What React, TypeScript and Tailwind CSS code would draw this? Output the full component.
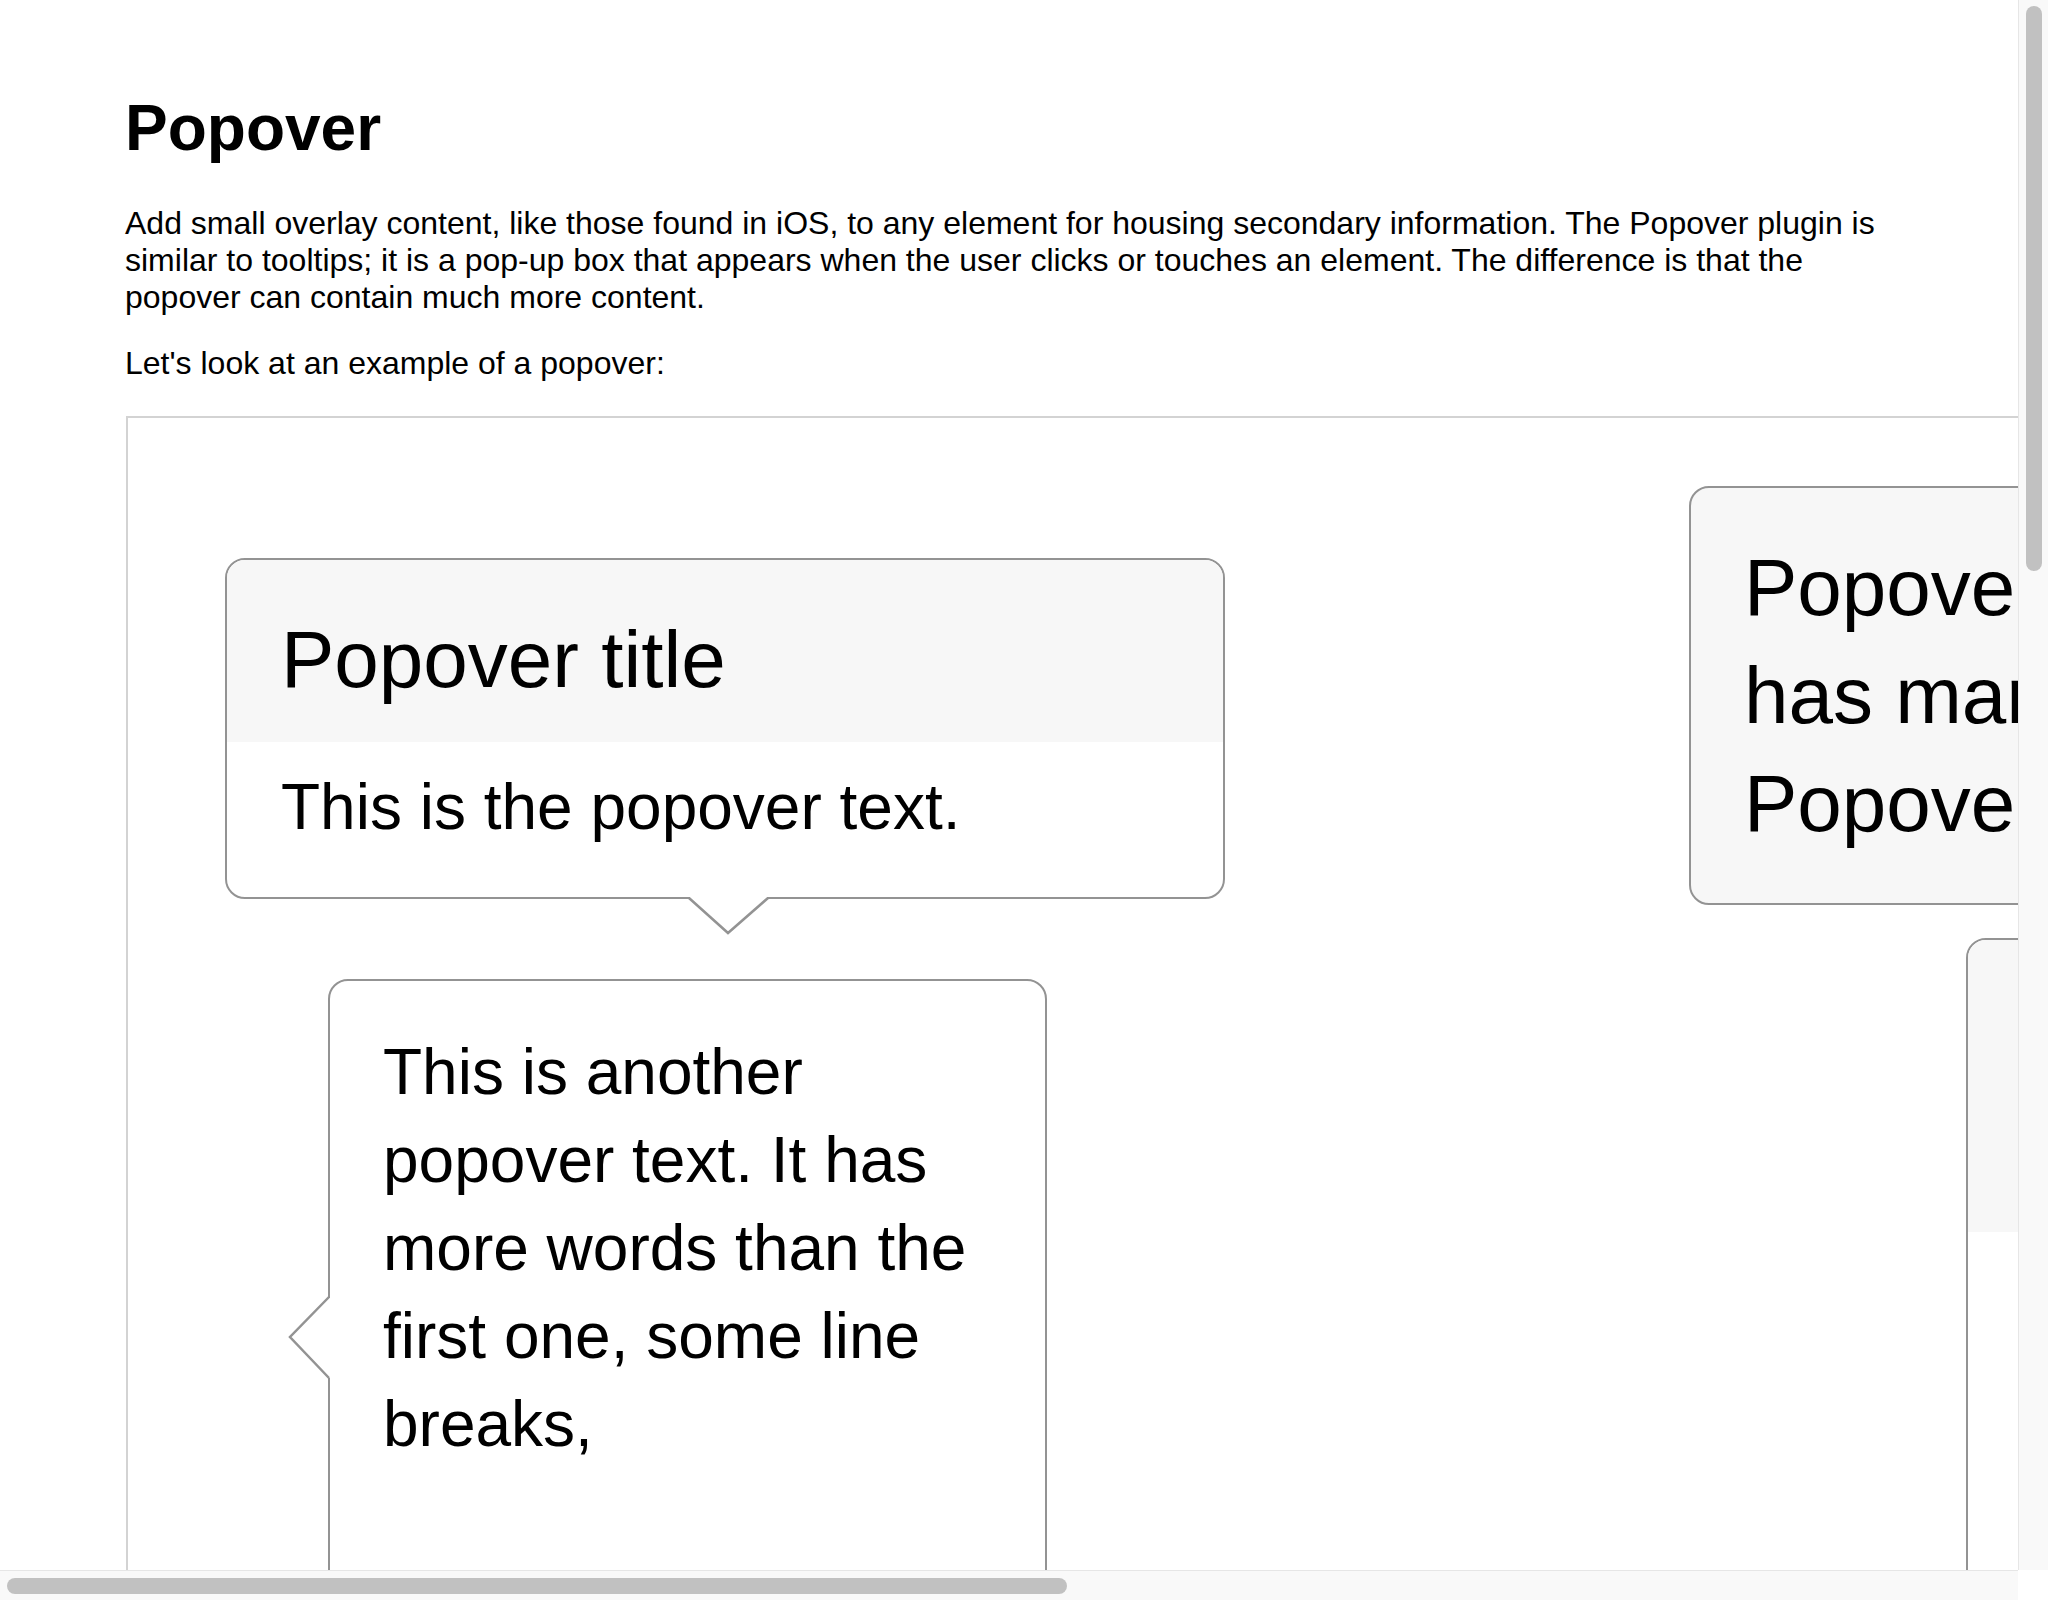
import React from 'react';

// ─── Popover arrows ───────────────────────────────────────────────────────────

function ArrowDown({ className }: { className: string }) {
  return (
    <svg className={className} width="80" height="40" viewBox="0 0 80 40" overflow="visible">
      <path d="M1 0 L78 0 L78 3 L39 38 L1 3 Z" fill="#fff" />
      <path d="M0 3 L39 38 L79 3" fill="none" stroke="#939393" strokeWidth="2.5" />
    </svg>
  );
}

function ArrowLeft({ className }: { className: string }) {
  return (
    <svg className={className} width="44" height="84" viewBox="0 0 44 84" overflow="visible">
      <path d="M40 2 L44 2 L44 82 L40 82 L2 41 Z" fill="#fff" />
      <path d="M41 1 L2 41 L41 82" fill="none" stroke="#939393" strokeWidth="2.5" />
    </svg>
  );
}

// ─── Example picture of popovers ──────────────────────────────────────────────

function PopoverDemo() {
  return (
    <div className="mt-[34px] ml-[1px] w-[2400px] h-[1400px] shrink-0 flex border-l-2 border-t-2 border-[#d3d3d3] bg-white">
      <div className="pl-[97px] pt-[140px] flex flex-col shrink-0">
        {/* Top popover with title */}
        <div className="relative w-[1000px] h-[341px] rounded-[20px] border-2 border-[#939393] bg-white">
          <div className="h-[182px] rounded-t-[18px] bg-[#f7f7f7] pl-[54px] pt-[52px] text-[80px] leading-[96px] whitespace-nowrap">
            Popover title
          </div>
          <div className="pl-[54px] pt-[27px] text-[64px] leading-[76px] whitespace-nowrap">
            This is the popover text.
          </div>
          <ArrowDown className="absolute left-[462px] top-[335px]" />
        </div>

        {/* Popover with arrow on the left */}
        <div className="relative mt-[80px] ml-[103px] w-[719px] h-[700px] rounded-[20px] border-2 border-[#939393] bg-white pl-[53px] pt-[47px] text-[64px] leading-[88px] whitespace-nowrap">
          This is another
          <br />
          popover text. It has
          <br />
          more words than the
          <br />
          first one, some line
          <br />
          breaks,
          <ArrowLeft className="absolute left-[-42px] top-[315px]" />
        </div>
      </div>

      <div className="ml-[464px] pt-[68px] flex flex-col shrink-0">
        <div className="w-[800px] h-[419px] rounded-[20px] border-2 border-[#939393] bg-[#f7f7f7] pl-[53px] pt-[46px] text-[80px] leading-[108px] whitespace-nowrap">
          Popover title that
          <br />
          has many words.
          <br />
          Popover title
        </div>

        <div className="mt-[33px] ml-[277px] w-[600px] h-[800px] rounded-[20px] border-2 border-[#939393] bg-white">
          <div className="h-[292px] rounded-t-[18px] bg-[#f7f7f7]" />
        </div>
      </div>
    </div>
  );
}

// ─── Window scrollbars ────────────────────────────────────────────────────────

function VerticalScrollbar() {
  return (
    <div className="w-[30px] shrink-0 border-l border-[#e6e6e6] bg-[#f9f9f9] pl-[7px] pt-[6px]">
      <div className="w-[16px] h-[565px] rounded-full bg-[#c1c1c1]" />
    </div>
  );
}

function HorizontalScrollbar() {
  return (
    <div className="h-[30px] shrink-0 flex">
      <div className="flex-1 border-t border-[#e6e6e6] bg-[#f9f9f9] pl-[7px] pt-[7px]">
        <div className="w-[1060px] h-[16px] rounded-full bg-[#c1c1c1]" />
      </div>
      <div className="w-[30px] bg-white" />
    </div>
  );
}

// ─── Page ─────────────────────────────────────────────────────────────────────

export default function App() {
  return (
    <div className="h-screen w-screen overflow-hidden flex flex-col bg-white text-black font-['Liberation_Sans',Arial,sans-serif]">
      <div className="flex flex-1 min-h-0">
        <main className="flex-1 min-w-0 overflow-hidden pl-[125px] pt-[91px]">
          <h1 className="text-[64px] leading-[74px] font-bold">Popover</h1>
          <p className="mt-[40px] text-[32px] leading-[37px] whitespace-nowrap">
            Add small overlay content, like those found in iOS, to any element for housing secondary information. The Popover plugin is
            <br />
            similar to tooltips; it is a pop-up box that appears when the user clicks or touches an element. The difference is that the
            <br />
            popover can contain much more content.
          </p>
          <p className="mt-[29px] text-[32px] leading-[37px]">Let's look at an example of a popover:</p>
          <PopoverDemo />
        </main>
        <VerticalScrollbar />
      </div>
      <HorizontalScrollbar />
    </div>
  );
}
